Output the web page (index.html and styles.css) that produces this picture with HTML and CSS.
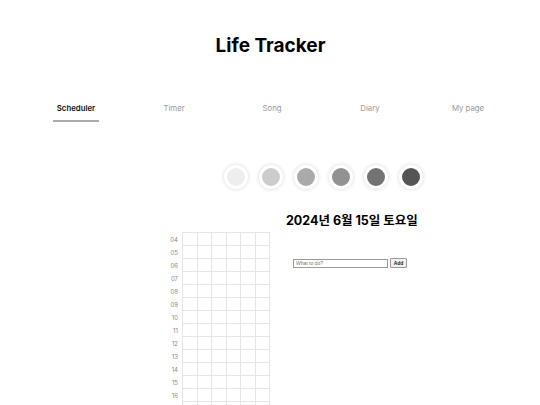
FILE: index.html
```html
<!DOCTYPE html>
<html lang="ko">
<head>
<meta charset="utf-8">
<title>Life Tracker</title>
<link rel="stylesheet" href="styles.css">
</head>
<body>
<div class="app">
  <h1 class="title">Life Tracker</h1>
  <nav class="tabs">
    <div class="tab"><span class="tab-label active">Scheduler</span></div>
    <div class="tab"><span class="tab-label">Timer</span></div>
    <div class="tab"><span class="tab-label">Song</span></div>
    <div class="tab"><span class="tab-label">Diary</span></div>
    <div class="tab"><span class="tab-label">My page</span></div>
  </nav>
  <div class="palette">
    <span class="swatch c1"></span>
    <span class="swatch c2"></span>
    <span class="swatch c3"></span>
    <span class="swatch c4"></span>
    <span class="swatch c5"></span>
    <span class="swatch c6"></span>
  </div>
  <main class="main">
    <section class="timetable">
      <div class="hours">
        <div class="hour">04</div><div class="hour">05</div><div class="hour">06</div><div class="hour">07</div>
        <div class="hour">08</div><div class="hour">09</div><div class="hour">10</div><div class="hour">11</div>
        <div class="hour">12</div><div class="hour">13</div><div class="hour">14</div><div class="hour">15</div>
        <div class="hour">16</div>
      </div>
      <div class="grid" id="grid"></div>
    </section>
    <section class="todo">
      <h2 class="date">2024년 6월 15일 토요일</h2>
      <form class="todo-form">
        <input class="todo-input" type="text" placeholder="What to do?">
        <button class="todo-add" type="button">Add</button>
      </form>
    </section>
  </main>
</div>
<script src="script.js"></script>
</body>
</html>
```
FILE: styles.css
```css
html, body {
  margin: 0;
  padding: 0;
  background: #ffffff;
  overflow: hidden;
}
body {
  font-family: Inter, "Noto Sans CJK KR", sans-serif;
  color: #111111;
}
.app {
  width: 540px;
  height: 405px;
  overflow: hidden;
}
.title {
  margin: 0;
  padding-top: 35px;
  font-size: 19px;
  line-height: 22px;
  font-weight: 700;
  text-align: center;
  color: #000000;
  padding-left: 1px;
}
.tabs {
  display: grid;
  grid-template-columns: repeat(5, 98px);
  width: 490px;
  margin: 45px 0 0 27px;
}
.tab {
  display: flex;
  justify-content: center;
}
.tab-label {
  display: inline-block;
  font-size: 7.8px;
  line-height: 12px;
  color: #999999;
  padding: 0 4px 6px;
  border-bottom: 2px solid transparent;
}
.tab-label.active {
  color: #111111;
  font-weight: 600;
  border-bottom-color: #aaaaaa;
}
.palette {
  display: flex;
  justify-content: center;
  gap: 11px;
  margin-top: 43px;
  padding-left: 106px;
}
.swatch {
  width: 18px;
  height: 18px;
  border-radius: 50%;
  border: 3px solid #ffffff;
  box-shadow: 0 0 4px rgba(0, 0, 0, 0.16);
}
.c1 { background: #eeeeee; }
.c2 { background: #cccccc; }
.c3 { background: #aaaaaa; }
.c4 { background: #929292; }
.c5 { background: #737373; }
.c6 { background: #555555; }
.main {
  display: flex;
  align-items: flex-start;
  margin-top: 24px;
  padding-left: 166px;
}
.timetable {
  display: flex;
  margin-top: 20px;
}
.hours {
  width: 16px;
}
.hour {
  height: 13px;
  line-height: 13px;
  font-size: 6px;
  color: #8a8a8a;
  text-align: right;
  padding-right: 4px;
  box-sizing: border-box;
}
.grid {
  display: grid;
  grid-template-columns: repeat(6, 14.5px);
  grid-auto-rows: 13px;
  border-top: 1px solid #e6e6e6;
  border-left: 1px solid #e6e6e6;
  margin-top: -1px;
}
.cell {
  border-right: 1px solid #e6e6e6;
  border-bottom: 1px solid #e6e6e6;
}
.todo {
  margin-left: 16px;
}
.date {
  margin: 0;
  font-size: 12.5px;
  line-height: 16px;
  font-weight: 700;
  color: #000000;
}
.todo-form {
  display: flex;
  align-items: center;
  gap: 2px;
  margin: 29px 0 0 7px;
}
.todo-input {
  box-sizing: border-box;
  width: 95px;
  height: 9px;
  padding: 0 2px;
  border: 1px solid #9a9a9a;
  font-family: "Liberation Sans", Arial, sans-serif;
  font-size: 5px;
  outline: none;
}
.todo-input::placeholder {
  color: #777777;
}
.todo-add {
  box-sizing: border-box;
  width: 17px;
  height: 10px;
  padding: 0;
  border: 1px solid #9a9a9a;
  border-radius: 1px;
  background: #f0f0f0;
  font-family: "Liberation Sans", Arial, sans-serif;
  font-size: 5px;
  font-weight: 700;
  color: #222222;
}
```
FILE: script.js
```js
(function () {
  var grid = document.getElementById('grid');
  var html = '';
  for (var i = 0; i < 14 * 6; i++) {
    html += '<div class="cell"></div>';
  }
  grid.innerHTML = html;
})();
```
